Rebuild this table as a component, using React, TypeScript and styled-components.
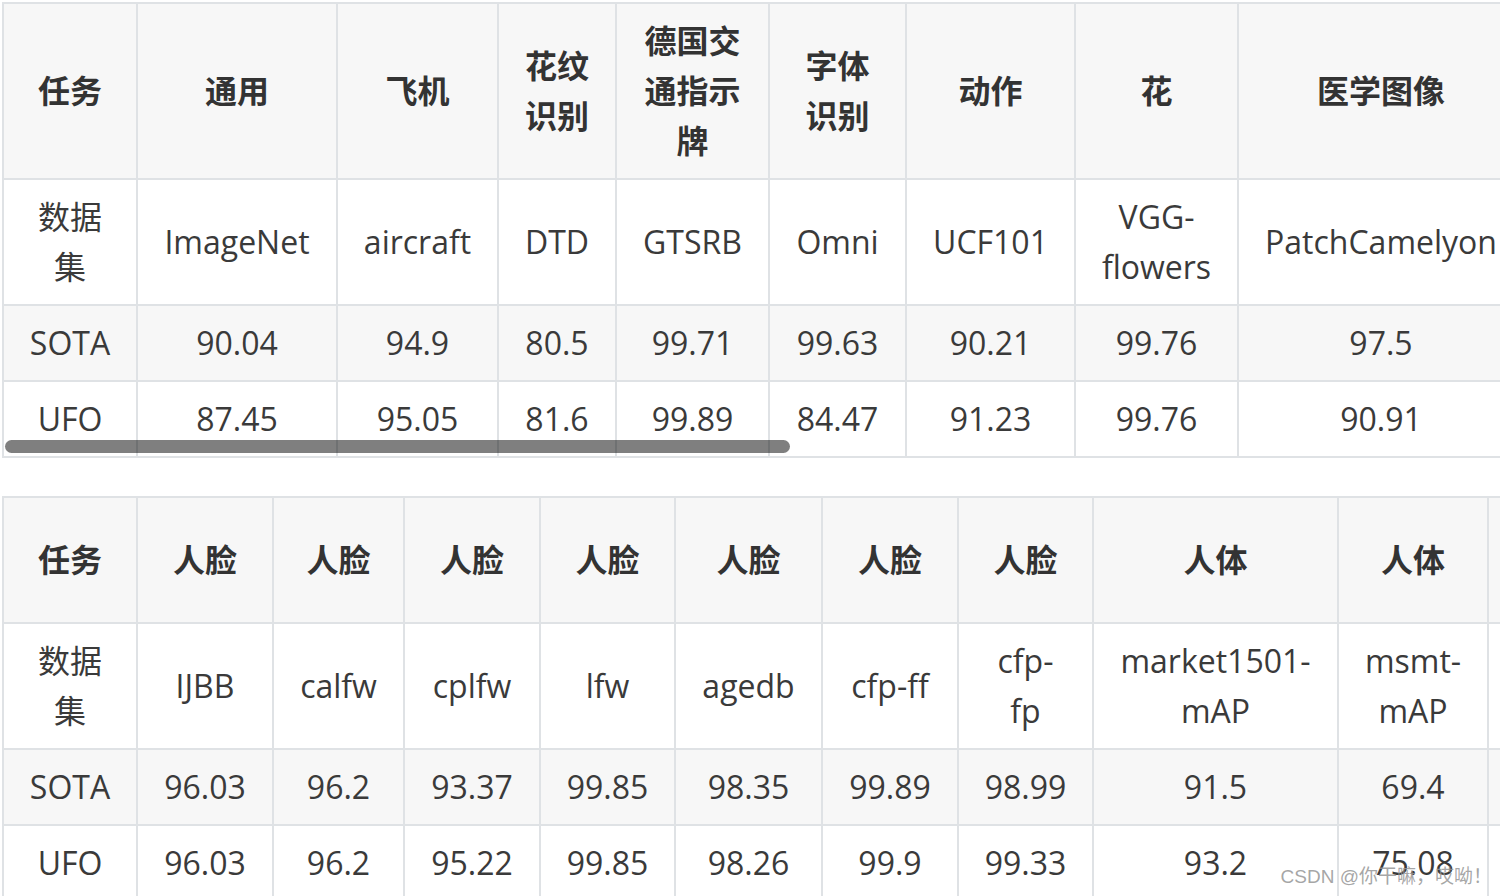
import styled, { createGlobalStyle } from "styled-components";

const GlobalStyle = createGlobalStyle`
  html, body {
    margin: 0;
    padding: 0;
    background: #fff;
  }
`;

type Table = {
  widths: number[];
  head: string[];
  rows: string[][];
  headHeight?: number;
  scroll?: number;
};

const tables: Table[] = [
  {
    widths: [134, 200, 161, 118, 153, 137, 169, 163, 286],
    head: ["任务", "通用", "飞机", "花纹识别", "德国交通指示牌", "字体识别", "动作", "花", "医学图像"],
    rows: [
      ["数据集", "ImageNet", "aircraft", "DTD", "GTSRB", "Omni", "UCF101", "VGG-flowers", "PatchCamelyon"],
      ["SOTA", "90.04", "94.9", "80.5", "99.71", "99.63", "90.21", "99.76", "97.5"],
      ["UFO", "87.45", "95.05", "81.6", "99.89", "84.47", "91.23", "99.76", "90.91"],
    ],
    scroll: 785,
  },
  {
    widths: [134, 136, 131, 136, 135, 147, 136, 135, 245, 150, 150],
    head: ["任务", "人脸", "人脸", "人脸", "人脸", "人脸", "人脸", "人脸", "人体", "人体", ""],
    rows: [
      ["数据集", "IJBB", "calfw", "cplfw", "lfw", "agedb", "cfp-ff", "cfp-fp", "market1501-mAP", "msmt-mAP", ""],
      ["SOTA", "96.03", "96.2", "93.37", "99.85", "98.35", "99.89", "98.99", "91.5", "69.4", ""],
      ["UFO", "96.03", "96.2", "95.22", "99.85", "98.26", "99.9", "99.33", "93.2", "75.08", ""],
    ],
    headHeight: 126,
  },
];

export default function App() {
  return (
    <>
      <GlobalStyle />
      <Page>
        {tables.map((t, i) => (
          <TableBox key={i}>
            <DataTable style={{ width: t.widths.reduce((a, b) => a + b, 0) }}>
              <colgroup>
                {t.widths.map((w, j) => (
                  <col key={j} style={{ width: w }} />
                ))}
              </colgroup>
              <thead>
                <HeadRow $h={t.headHeight}>
                  {t.head.map((h, j) => (
                    <th key={j}>{h}</th>
                  ))}
                </HeadRow>
              </thead>
              <tbody>
                {t.rows.map((r, j) => (
                  <tr key={j}>
                    {r.map((c, k) => (
                      <td key={k}>{c}</td>
                    ))}
                  </tr>
                ))}
              </tbody>
            </DataTable>
            {t.scroll && <ScrollThumb style={{ width: t.scroll }} />}
          </TableBox>
        ))}
        <Watermark>CSDN @你干嘛，哎呦！</Watermark>
      </Page>
    </>
  );
}

// styles

const Page = styled.div`
  position: relative;
  height: 896px;
  overflow: hidden;
  padding: 2px 0 0 2px;
  box-sizing: border-box;
  font-family: "Open Sans", "Noto Sans CJK SC", sans-serif;
`;

const TableBox = styled.div`
  position: relative;
  overflow: hidden;
  margin-bottom: 38px;
`;

const DataTable = styled.table`
  border-collapse: collapse;
  table-layout: fixed;
  font-size: 32px;
  line-height: 50px;
  text-align: center;
  & th,
  & td {
    border: 2px solid #dfe2e5;
    padding: 12px 24px;
    overflow-wrap: break-word;
  }
  & th {
    background: #f7f7f7;
    color: #333;
    font-weight: 700;
  }
  & td {
    color: #3a3a3a;
    font-weight: 400;
  }
  & tbody tr:nth-child(2n) td {
    background: #f7f7f7;
  }
`;

const HeadRow = styled.tr<{ $h?: number }>`
  height: ${(p) => (p.$h ? `${p.$h}px` : "auto")};
`;

const ScrollThumb = styled.div`
  position: absolute;
  left: 3px;
  bottom: 5px;
  height: 13px;
  border-radius: 7px;
  background: rgba(0, 0, 0, 0.5);
`;

const Watermark = styled.div`
  position: absolute;
  right: 8px;
  bottom: 8px;
  font-family: "Liberation Sans", "Noto Sans CJK SC", sans-serif;
  font-size: 19px;
  color: rgba(150, 150, 150, 0.85);
`;
